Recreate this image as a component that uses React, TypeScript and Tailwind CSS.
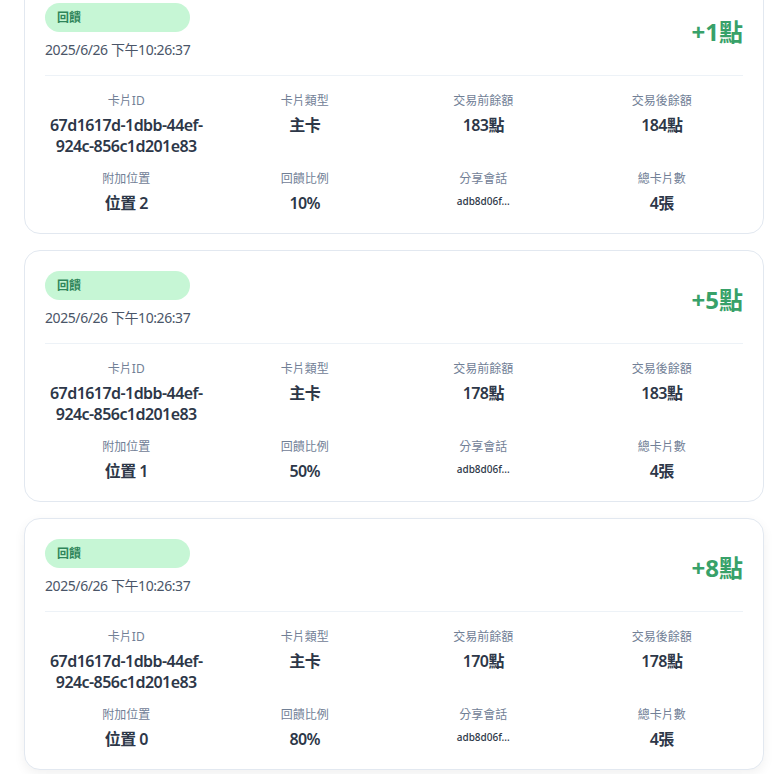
import React from "react";

type Rec = {
  amount: string;
  before: string;
  after: string;
  pos: string;
  ratio: string;
  hover?: boolean;
};

const recs: Rec[] = [
  { amount: "+1點", before: "183點", after: "184點", pos: "位置 2", ratio: "10%" },
  { amount: "+5點", before: "178點", after: "183點", pos: "位置 1", ratio: "50%" },
  { amount: "+8點", before: "170點", after: "178點", pos: "位置 0", ratio: "80%", hover: true },
];

function Cell({ label, value, small }: { label: string; value: string; small?: boolean }) {
  return (
    <div className="flex flex-col items-center text-center">
      <div className="text-[12px] leading-[16px] text-[#718096]">{label}</div>
      {small ? (
        <div className="mt-[6px] text-[10px] leading-[16px] font-medium text-[#2d3748]">{value}</div>
      ) : (
        <div className="mt-[6px] text-[16px] leading-[21px] font-semibold tracking-[-0.035em] text-[#2d3748]">{value}</div>
      )}
    </div>
  );
}

function Card({ r }: { r: Rec }) {
  return (
    <div
      className={
        "rounded-2xl border border-[#e2e8f0] bg-white px-[20px] pt-[20px] pb-[19px] " +
        (r.hover ? "shadow-[0_4px_12px_rgba(0,0,0,0.06)]" : "")
      }
    >
      <div className="flex items-center justify-between border-b border-[#edf2f7] pb-[15px]">
        <div className="flex flex-col">
          <div className="rounded-full bg-[#c6f6d5] px-[12px] py-[6px] text-[12px] leading-[17px] font-bold text-[#2f855a]">
            回饋
          </div>
          <div className="mt-[8px] text-[14px] leading-[20px] tracking-[-0.03em] text-[#4a5568]">2025/6/26 下午10:26:37</div>
        </div>
        <div className="text-[24px] leading-[30px] font-bold text-[#38a169]">{r.amount}</div>
      </div>
      <div className="grid grid-cols-4 gap-x-4 gap-y-[14px] pt-[17px]">
        <Cell label="卡片ID" value="67d1617d-1dbb-44ef-924c-856c1d201e83" />
        <Cell label="卡片類型" value="主卡" />
        <Cell label="交易前餘額" value={r.before} />
        <Cell label="交易後餘額" value={r.after} />
        <Cell label="附加位置" value={r.pos} />
        <Cell label="回饋比例" value={r.ratio} />
        <Cell label="分享會話" value="adb8d06f..." small />
        <Cell label="總卡片數" value="4張" />
      </div>
    </div>
  );
}

export default function App() {
  return (
    <div
      className="h-[774px] w-[782px] overflow-hidden bg-white"
      style={{ fontFamily: '"Noto Sans", "Noto Sans CJK TC", sans-serif' }}
    >
      <div className="-mt-[18px] ml-[24px] flex w-[740px] flex-col gap-4">
        {recs.map((r, i) => (
          <Card key={i} r={r} />
        ))}
      </div>
    </div>
  );
}
